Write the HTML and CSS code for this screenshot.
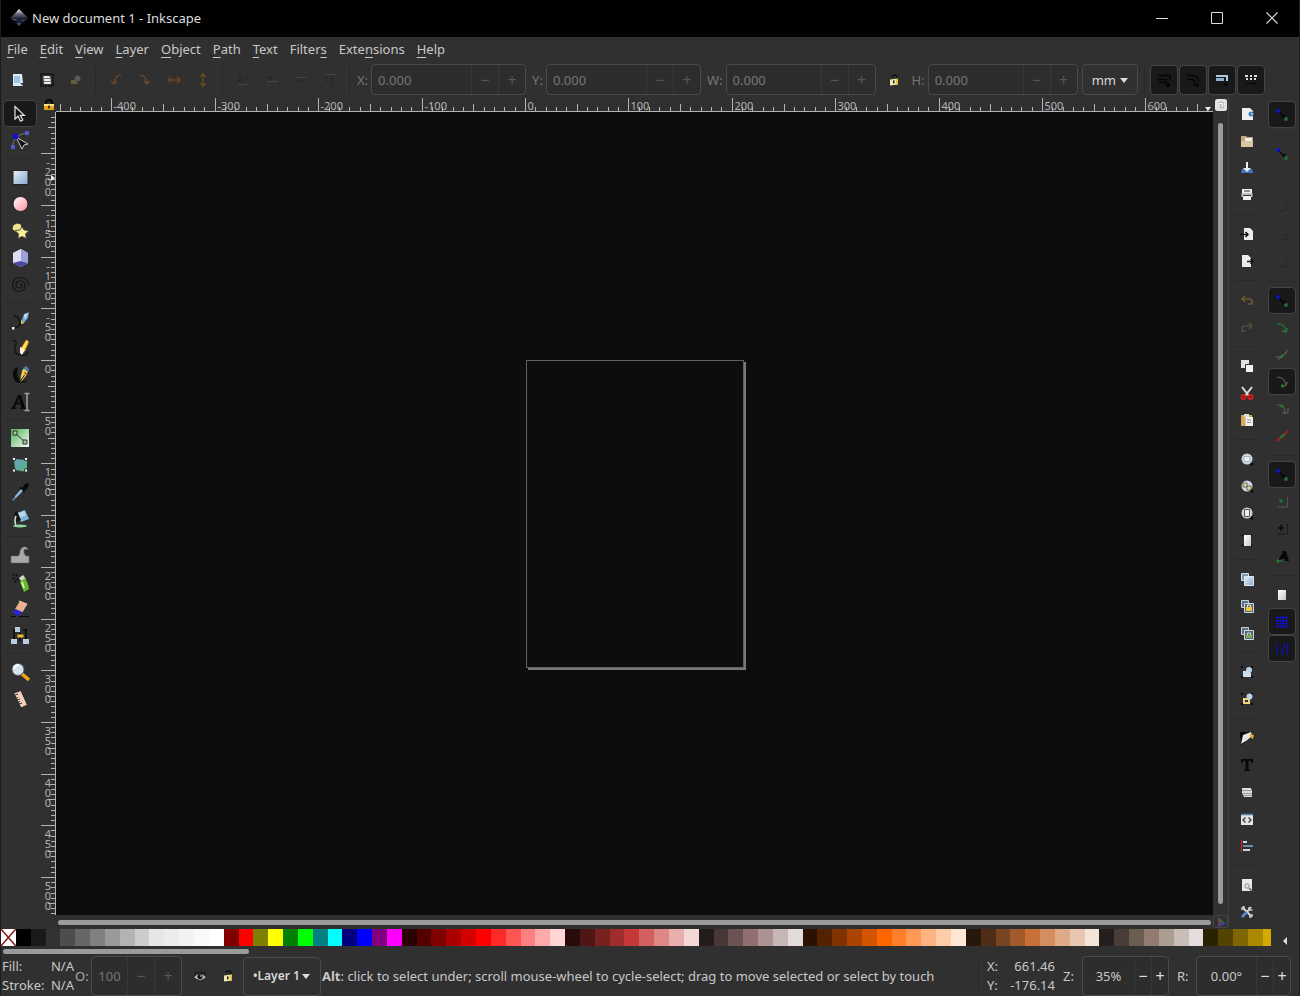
FILE: index.html
```html
<!DOCTYPE html>
<html lang="en">
<head>
<meta charset="utf-8">
<title>New document 1 - Inkscape</title>
<link rel="stylesheet" href="styles.css">
</head>
<body>
<header class="titlebar">
  <svg class="logo" viewBox="0 0 20 20"><defs><linearGradient id="lg" x1="0" y1="0" x2="0" y2="1"><stop offset="0" stop-color="#fff"/><stop offset=".5" stop-color="#667"/><stop offset="1" stop-color="#223"/></linearGradient></defs><path d="M10 1 18 9q1.500 2-1 3l-4 .8 2.500 1.400-3 1.200L10 19l-2-3-2.500-1.500L7 13l-4-1q-2.500-1-1-3z" fill="#1c2030"/><path d="M10 1 19 10l-4-1-1.500 2L11 8.500 9 11 7 9l-2 1.500-3-.5z" fill="url(#lg)"/><path d="M3 11h5l-2 2zM12 12h5l-3 1.500zM8 15h4l-2 3z" fill="#4a5070"/></svg>
  <h1>New document 1 - Inkscape</h1>
  <div class="window-buttons">
    <button aria-label="Minimize"><svg viewBox="0 0 14 14"><path d="M1 7.500h12" stroke="#ddd" fill="none"/></svg></button>
    <button aria-label="Maximize"><svg viewBox="0 0 14 14"><path d="M1.500 1.500h11v11h-11z" stroke="#ddd" fill="none"/></svg></button>
    <button aria-label="Close"><svg viewBox="0 0 14 14"><path d="M1.500 1.500l11 11m0-11-11 11" stroke="#ddd" stroke-width="1.200" fill="none"/></svg></button>
  </div>
</header>
<nav class="menubar">
  <button><u>F</u>ile</button><button><u>E</u>dit</button><button><u>V</u>iew</button><button><u>L</u>ayer</button><button><u>O</u>bject</button><button><u>P</u>ath</button><button><u>T</u>ext</button><button>Filter<u>s</u></button><button>Exte<u>n</u>sions</button><button><u>H</u>elp</button>
</nav>
<div class="toolbar">
  <div class="icon-group" data-icons="selall sellayer desel"></div>
  <i class="vsep"></i>
  <div class="icon-group" data-icons="rotl rotr fliph flipv"></div>
  <i class="vsep"></i>
  <div class="icon-group" data-icons="bottom lower raise top"></div>
  <i class="vsep tight"></i>
  <div class="field"><label for="fx">X:</label><span class="spin wide"><input id="fx" value="0.000" disabled><button disabled>−</button><button disabled>+</button></span></div>
  <div class="field"><label for="fy">Y:</label><span class="spin wide"><input id="fy" value="0.000" disabled><button disabled>−</button><button disabled>+</button></span></div>
  <div class="field"><label for="fw">W:</label><span class="spin"><input id="fw" value="0.000" disabled><button disabled>−</button><button disabled>+</button></span></div>
  <button class="lock" aria-label="Lock ratio"><svg viewBox="0 0 16 16"><use href="#unlock"/></svg></button>
  <div class="field"><label for="fh">H:</label><span class="spin"><input id="fh" value="0.000" disabled><button disabled>−</button><button disabled>+</button></span></div>
  <span class="drop unit"><select aria-label="Unit"><option>mm</option></select></span>
  <i class="vsep short"></i>
  <div class="toggles" data-toggles="scstroke sccorner scgrad scpat"></div>
</div>
<main class="work">
  <div class="toolbox" data-icons="arrow* node | rect circle star cube spiral | bezier pencil calli text | gradient mesh dropper bucket | tweak spray eraser connector | zoom measure"></div>
  <section class="desk">
    <button class="guide-lock" aria-label="Lock guides"><svg viewBox="0 0 12 12"><path d="M3 6V3.500q0-2.500 3-2.500t3 2.500V6" fill="none" stroke="#050505" stroke-width="2"/><path d="M1 5h10v6H1z" fill="#e9a11c"/><path d="M1 5h10v2H1z" fill="#ffe27a"/><path d="M5.200 6.500h1.600v3H5.200z" fill="#222"/></svg></button>
    <div class="ruler-h"><svg id="rh"></svg></div>
    <button class="corner-top" aria-label="Zoom with window"><svg viewBox="0 0 12 12"><rect width="12" height="12" rx="2.500" fill="#e4e4e4"/><rect x="3" y="2.500" width="6" height="7" rx="2" fill="#bbb"/><path d="M4 9V4.500h3.500V7H6" fill="none" stroke="#fff"/></svg></button>
    <div class="ruler-v"><svg id="rv"></svg></div>
    <div class="canvas"><div class="page"></div></div>
    <div class="scroll-v"><i></i></div>
    <div class="scroll-h"><i></i></div>
    <button class="corner-bottom" aria-label="Color managed view"><svg viewBox="0 0 12 12"><path d="M3 1l4 5-4 5z" fill="#743a40"/><path d="M3 1l8 7-5-2z" fill="#2f7a44"/><path d="M3 11l4-5 4 2z" fill="#3d44a0"/></svg></button>
  </section>
  <div class="commands" data-icons="new open save print | import export | undo redo | copy cut paste | zsel zdraw zpage page | dup clone unlink | group ungroup | fill ttext layers xml align | docprop prefs"></div>
  <div class="snaps" data-icons="snap* | snap sn1 sn2 sn3 sn4 | snap* spath sint scusp* ssmooth sline | snap* sobj srot stext | spage sgrid* sguide*"></div>
</main>
<div class="palette"><div class="swatches" id="swatches"></div><button class="palette-menu" aria-label="Palette menu"><svg viewBox="0 0 6 8"><path d="M5 0v8L1 4z" fill="#ddd"/></svg></button></div>
<div class="palette-scroll"><i></i></div>
<footer class="status">
  <div class="style"><span>Fill:</span><b>N/A</b><span>Stroke:</span><b>N/A</b></div>
  <div class="field opacity"><label for="fo">O:</label><span class="spin"><input id="fo" value="100" disabled><button disabled>−</button><button disabled>+</button></span></div>
  <button class="mini" aria-label="Layer visibility"><svg viewBox="0 0 16 16"><path d="M2 9q6-7 12 0-6 6-12 0z" fill="#bbb"/><circle cx="8" cy="8.500" r="2.600" fill="#111"/><circle cx="9" cy="8" r=".8" fill="#fff"/><path d="M2 8.500q6-7 12 0M4 6 3 4m3.500 1L6 3m3.500 2 .5-2m2 3 1-2" stroke="#111" fill="none"/></svg></button>
  <button class="mini" aria-label="Layer lock"><svg viewBox="0 0 16 16"><use href="#unlock"/></svg></button>
  <span class="drop layer"><select aria-label="Layer"><option>•Layer 1</option></select></span>
  <p><strong>Alt</strong>: click to select under; scroll mouse-wheel to cycle-select; drag to move selected or select by touch</p>
  <i class="vsep"></i>
  <div class="coords"><span>X:</span><b>661.46</b><span>Y:</span><b>-176.14</b></div>
  <div class="field view"><label for="fz">Z:</label><span class="spin"><input id="fz" value="35%"><button>−</button><button>+</button></span></div>
  <div class="field view rot"><label for="fr">R:</label><span class="spin"><input id="fr" value="0.00°"><button>−</button><button>+</button></span></div>
</footer>
<svg class="defs" aria-hidden="true">
  <defs>
    <linearGradient id="blue" x1="0" y1="0" x2="1" y2="1"><stop offset="0" stop-color="#e8f0f8"/><stop offset="1" stop-color="#86a8cc"/></linearGradient>
    <linearGradient id="pink" x1="0" y1="0" x2="1" y2="1"><stop offset="0" stop-color="#fff"/><stop offset="1" stop-color="#ff8f9c"/></linearGradient>
    <linearGradient id="green" x1="0" y1="0" x2="1" y2="1"><stop offset="0" stop-color="#4fae58"/><stop offset="1" stop-color="#f4fff4"/></linearGradient>
    <linearGradient id="teal" x1="0" y1="0" x2="1" y2="1"><stop offset="0" stop-color="#6fa3c4"/><stop offset="1" stop-color="#4fb277"/></linearGradient>
    <linearGradient id="grey" x1="0" y1="0" x2="1" y2="1"><stop offset="0" stop-color="#fff"/><stop offset="1" stop-color="#c8c8c4"/></linearGradient>
  </defs>
  <symbol id="unlock" viewBox="0 0 16 16"><path d="M6 5q0-2 2.500-2T11 5v3" fill="none" stroke="#111" stroke-width="1.600"/><path d="M4 7.500l8-1v6l-8 1z" fill="#eee9b0"/><path d="M10 7l2-.5v6l-2 .3z" fill="#e5c33b"/><path d="M7 8.500l1.500-.2v3L7 11.500z" fill="#222"/></symbol>

  <symbol id="arrow" viewBox="0 0 20 20"><path d="M5 2.500v12.500l3-2.800 2.500 5 2.300-1.200-2.500-4.700h4z" fill="#111" stroke="#e6e6e6" stroke-width="1.200"/></symbol>
  <symbol id="node" viewBox="0 0 20 20"><path d="M2 16Q4 3 17 2" fill="none" stroke="#777"/><path d="M6 6l12 7-4 1-2 4z" fill="#111" stroke="#ccc"/><path d="M3 3h5v5H3z" fill="#1010d0"/><path d="M1 14h4v4H1zM15 0h4v4h-4z" fill="#5656c8"/></symbol>
  <symbol id="rect" viewBox="0 0 20 20"><path d="M3 3.500h15v14H3z" fill="url(#blue)" stroke="#222"/></symbol>
  <symbol id="circle" viewBox="0 0 20 20"><circle cx="10.500" cy="10" r="7.500" fill="url(#pink)" stroke="#222"/></symbol>
  <symbol id="star" viewBox="0 0 20 20"><path d="M7 2l4 1 1 4-2 4H5L2 8l1-4z" fill="#efe28e" stroke="#222" stroke-width=".8"/><path d="M12 5.500l2 3.500 5 .5-3.500 3.500 1 4.500-4.500-2-4 2 .5-4.500L5 9.500 10 9z" fill="#f8ee9c" stroke="#333" stroke-width=".8"/></symbol>
  <symbol id="cube" viewBox="0 0 20 20"><path d="M3 5l8-4 7 4v10l-7 4-8-4z" fill="#b9b9e4"/><path d="M3 5l8-4v12l-8 2z" fill="#dcdcf2"/><path d="M3 15l8-2 7 2-7 4z" fill="#4a4aa0"/><path d="M11 1l7 4v10l-7-2z" fill="#a0a0dc"/></symbol>
  <symbol id="spiral" viewBox="0 0 20 20"><path d="M10 10q1-1 2 0 1 3-2 3-4 0-4-3.500T10.500 6Q15 6 15 11t-5.500 5.500Q3 16 2.500 10 3 3 10 2.500q8 0 9 8" fill="none" stroke="#151515" stroke-width="1.200"/></symbol>
  <symbol id="bezier" viewBox="0 0 20 20"><path d="M2 17q8 0 8-5T4 4" fill="none" stroke="#151515" stroke-width="1.500"/><path d="M2 16h2.500v2.500H2z" fill="#eee"/><path d="M11 11l3-8 5-2-1 6-5 6z" fill="#6aa6c8"/><path d="M14 4l4-2-3 7z" fill="#d0e6f2"/><path d="M11 9l3 3-3 1z" fill="#f0c040"/></symbol>
  <symbol id="pencil" viewBox="0 0 20 20"><path d="M2 3q5-2 4 3-4 10 4 11t8-4" fill="none" stroke="#161616" stroke-width="1.500"/><path d="M11 10l5-8 3 2-4 9-4 2z" fill="#f5a81c"/><path d="M12 10l5-8 1 1-4 9z" fill="#ffe07a"/><path d="M10 9l5 3-3 5-2-2z" fill="#fff1d8"/></symbol>
  <symbol id="calli" viewBox="0 0 20 20"><path d="M8 2Q2 4 3 11t7 7q6 0 8-3-6 3-9-1T8 2z" fill="#0b0b0b"/><path d="M12 5l4-4 3 3-2 6-5 6-2 1 .5-6z" fill="#e9cf5e" stroke="#222" stroke-width=".6"/><path d="M13 3l3-2 3 3-1 3z" fill="#4a7ba8"/><path d="M15 7l2 2-1 1-2-2z" fill="#c22"/><path d="M10.500 16l4-6" stroke="#222"/></symbol>
  <symbol id="text" viewBox="0 0 20 20"><path d="M1 17v-1.500h1.500L8 3h3l4 12.500h1V17h-6v-1.500h1.500L10.500 12.500H6L5 15.500h1.500V17zM7 10.500h3L9 6.500z" fill="#0a0a0a"/><path d="M14.500 1.500h5m-5 17h5M17 1.500v17" stroke="#a0a0a0" stroke-width="1.500"/></symbol>
  <symbol id="gradient" viewBox="0 0 20 20"><path d="M1 1h18v18H1z" fill="url(#green)"/><path d="M5 5l10 9" stroke="#333"/><path d="M3 3h4v4H3zM13 12h4v4h-4z" fill="#9fcaa0" stroke="#333"/></symbol>
  <symbol id="mesh" viewBox="0 0 20 20"><path d="M4 4l13 1 0 12L5 15z" fill="url(#teal)"/><path d="M2.500 2.500h3v3h-3zM14.500 2.500h3v3h-3zM2.500 14h3v3h-3zM14.500 14h3v3h-3z" fill="#eee" stroke="#222" stroke-width=".8"/></symbol>
  <symbol id="dropper" viewBox="0 0 20 20"><path d="M12 6l3-4 3-1 1 2-2 4-3 2 1 1-1 1-5-5 1-1z" fill="#0a0a0a"/><path d="M11 7l2 2-7 7-2 1 1-3z" fill="#8fb4d4"/><circle cx="3.500" cy="17.500" r="1.300" fill="#4d7cab"/></symbol>
  <symbol id="bucket" viewBox="0 0 20 20"><path d="M7 4l8-3 4 9-8 3z" fill="#7eb6da"/><path d="M8 4l6-2 2 4-6 3z" fill="#b8d8ec"/><path d="M5 8q-2-5 2-6l4 9-6 2q3-3 2-6L5 16H4z" fill="#151515"/><path d="M6 7q-2 4 0 10" stroke="#c4f0d0" stroke-width="1.500" fill="none"/><ellipse cx="10" cy="17" rx="7" ry="1.500" fill="#8ed69c"/></symbol>
  <symbol id="tweak" viewBox="0 0 20 20"><path d="M1 11h7q2-1 2-5 2-5 6-4 2 1 2 3-2-2-4 0-1 3 2 6h3v7H1z" fill="#a8a8a8" stroke="#666" stroke-width=".5"/></symbol>
  <symbol id="spray" viewBox="0 0 20 20"><path d="M3 2h1v1H3zM6 3h1v1H6zM3 6h1v1H3zM7 7h1v1H7zM5 9h1v1H5z" stroke="#080808" fill="none"/><path d="M9 6l4-3 3 4-4 3z" fill="#d8d8c8"/><path d="M10 10l5-4 3 6 1 5-5 3z" fill="#65b82c"/><path d="M12 10l2 6" stroke="#d2f3a2" stroke-width="2"/></symbol>
  <symbol id="eraser" viewBox="0 0 20 20"><path d="M1 17.500h5m3 0h10" stroke="#0a0a0a"/><path d="M10 2l7 3-5 8-7-3z" fill="#edae90"/><path d="M5 10l7 3-3 4-6-3z" fill="#2626d8"/><path d="M9 2l8 3-5 8" fill="none" stroke="#e9c7b0"/></symbol>
  <symbol id="connector" viewBox="0 0 20 20"><path d="M8 4H4v10m9-10h3v10M10 7v8" stroke="#080808" fill="none" stroke-width="1.500"/><path d="M5 1h5v5H5zM1 13h6v5H1zM13 13h6v5h-6z" fill="#b7cde5"/><path d="M7.500 8.500h6v3h-6z" fill="#f2b535"/></symbol>
  <symbol id="zoom" viewBox="0 0 20 20"><path d="M12 12l7 6" stroke="#f0a616" stroke-width="3.500"/><circle cx="8" cy="7.500" r="6" fill="#d3e2ef" stroke="#555"/><path d="M4 7q0-4 5-4" stroke="#fff" stroke-width="2" fill="none"/></symbol>
  <symbol id="measure" viewBox="0 0 20 20"><path d="M3.500 4L11 1.500 17.500 16 11 19z" fill="#efcdb9" stroke="#222"/><path d="M5 6l3-1M6 9l2-.5M7 11l3-1M8 13l2-.5M9 15l3-1" stroke="#333"/></symbol>

  <symbol id="selall" viewBox="0 0 16 16"><path d="M3 2h9l1 9v3H3z" fill="#dcebf7"/><path d="M4 4h6v7H4z" fill="#9ec3e2"/><path d="M10 11h3v3z" fill="#346"/></symbol>
  <symbol id="sellayer" viewBox="0 0 16 16"><path d="M2 2h12v12H2z" fill="none" stroke="#060606" stroke-width="1.500" stroke-dasharray="1.500 1"/><path d="M4.500 4h6l1 2 .5 6H5z" fill="#e8e8e8"/><path d="M5 6.500h6m-6 3h7" stroke="#777"/></symbol>
  <symbol id="desel" viewBox="0 0 16 16"><path d="M2 2h12v12H2z" fill="none" stroke="#3d2524" stroke-dasharray="1 1"/><circle cx="9.500" cy="6.500" r="3" fill="#59595a"/><path d="M3 8h4l3 4H3z" fill="#655c3c"/></symbol>
  <symbol id="rotl" viewBox="0 0 16 16"><path d="M13 3Q7 3 6 12M3 9l3 3 3-3" fill="none" stroke="#67452a" stroke-width="1.600"/></symbol>
  <symbol id="rotr" viewBox="0 0 16 16"><path d="M3 3q6 0 7 9M7 9l3 3 3-3" fill="none" stroke="#67452a" stroke-width="1.600"/></symbol>
  <symbol id="fliph" viewBox="0 0 16 16"><path d="M2 8h12M5 5L2 8l3 3m6-6 3 3-3 3" fill="none" stroke="#67452a" stroke-width="1.600"/></symbol>
  <symbol id="flipv" viewBox="0 0 16 16"><path d="M8 2v12M5 5l3-3 3 3m-6 6 3 3 3-3" fill="none" stroke="#67452a" stroke-width="1.600"/></symbol>
  <symbol id="bottom" viewBox="0 0 16 16"><path d="M5 2v8M3 8l2 2 2-2m3-4h4m-4 3h4" stroke="#242424" fill="none"/><path d="M2 12.500h12" stroke="#4b4635"/></symbol>
  <symbol id="lower" viewBox="0 0 16 16"><path d="M2 6h5m0-2v5" stroke="#242424"/><path d="M3 9.500h11" stroke="#504832"/></symbol>
  <symbol id="raise" viewBox="0 0 16 16"><path d="M2 5.500h11" stroke="#454545"/><path d="M3 9h6m2-2v5" stroke="#242424"/></symbol>
  <symbol id="top" viewBox="0 0 16 16"><path d="M2 2.500h12" stroke="#454545"/><path d="M10 14V5M8 7l2-2 2 2M3 6h4M3 9h4" stroke="#242424" fill="none"/></symbol>
  <symbol id="scstroke" viewBox="0 0 16 16"><path d="M2 3.500h12v5M2 7.500h8v3H3m9 0v4m-2-2 2 2 2-2" fill="none" stroke="#050505" stroke-width="1.500"/></symbol>
  <symbol id="sccorner" viewBox="0 0 16 16"><path d="M2 3.500h6q5 0 6 6M2 7.500h5q3 0 3 4M8 13h6m-2-2v4" fill="none" stroke="#050505" stroke-width="1.300"/></symbol>
  <symbol id="scgrad" viewBox="0 0 16 16"><path d="M2 3h12v6h-2V5H2z" fill="#b2cbe4"/><path d="M2 6h8v3H2z" fill="#8fb0d2"/><path d="M9 12.500h5m-2-2v4" stroke="#000"/></symbol>
  <symbol id="scpat" viewBox="0 0 16 16"><path d="M2 3h3v2H2zM7 3h2v2H7zM11 3h3v2h-3zM3 6h2v2H3zM7 6h2v2H7zM11 6h2v2h-2z" fill="#ddd"/><path d="M3 11.500h10m-2-2 2 2-2 2" stroke="#050505" fill="none"/></symbol>

  <symbol id="new" viewBox="0 0 16 16"><path d="M3 2h8l3 3v9H3z" fill="#f0f0ee"/><circle cx="12" cy="8" r="2.500" fill="#3d7cc0"/><path d="M12 8h2" stroke="#fff"/></symbol>
  <symbol id="open" viewBox="0 0 16 16"><path d="M2 3h5l1 1h6v10H2z" fill="#c3a67e"/><path d="M6 5h7v4H6z" fill="#eee"/><path d="M2 8h12v6H2z" fill="#dcc6a2"/></symbol>
  <symbol id="save" viewBox="0 0 16 16"><path d="M3 9h10l1 4H2z" fill="#3e78c4"/><path d="M7 2h2v6h3l-4 4-4-4h3z" fill="#eee"/></symbol>
  <symbol id="print" viewBox="0 0 16 16"><path d="M3 2h10v4H3z" fill="#eee"/><path d="M5 4h6" stroke="#333"/><path d="M2.500 6h11v4h-11z" fill="#bcc0bc"/><path d="M4 9h8v4H4z" fill="#eef5e8"/><path d="M4 8.500h8" stroke="#333"/></symbol>
  <symbol id="import" viewBox="0 0 16 16"><path d="M5 2h6l3 3v9H5z" fill="#ecece8"/><path d="M1 8.500h8M6.500 6 9 8.500 6.500 11" fill="none" stroke="#111" stroke-width="1.500"/></symbol>
  <symbol id="export" viewBox="0 0 16 16"><path d="M3 2h6l3 3v9H3z" fill="#ecece8"/><path d="M8 8.500h6M11.500 6 14 8.500 11.500 11" fill="none" stroke="#111" stroke-width="1.500"/></symbol>
  <symbol id="undo" viewBox="0 0 16 16"><path d="M6 4L3 7l3 3M3 7h8q3 1 2 5l-4 0" fill="none" stroke="#655a30" stroke-width="1.600"/></symbol>
  <symbol id="redo" viewBox="0 0 16 16"><path d="M10 4l3 3-3 3m3-3H5q-3 1-2 5h4" fill="none" stroke="#42543a" stroke-width="1.600"/></symbol>
  <symbol id="copy" viewBox="0 0 16 16"><path d="M2 2h8v8H2z" fill="#e2e2e0"/><path d="M6.500 6.500h8v8h-8z" fill="#f2f2ee" stroke="#333"/></symbol>
  <symbol id="cut" viewBox="0 0 16 16"><path d="M3 2l7 9m3-9-7 9" stroke="#ddd" stroke-width="2"/><circle cx="4.500" cy="12" r="2" fill="none" stroke="#d91c1c" stroke-width="2"/><circle cx="11.500" cy="12" r="2" fill="none" stroke="#d91c1c" stroke-width="2"/></symbol>
  <symbol id="paste" viewBox="0 0 16 16"><path d="M2 3h11v11H2z" fill="#d5a65c"/><path d="M5 2h5v3H5z" fill="#ddd"/><path d="M6.500 5h7.500v9H6.500z" fill="#f0f0ec"/><path d="M8 8h4m-4 2.500h4" stroke="#999"/></symbol>
  <symbol id="lens" viewBox="0 0 16 16"><path d="M10 11l4 3" stroke="#080808" stroke-width="2.500"/><circle cx="8" cy="8" r="5.500" fill="#c9d8e3"/></symbol>
  <symbol id="zsel" viewBox="0 0 16 16"><use href="#lens"/><path d="M5 5.500h6v5H5z" fill="#eee" stroke="#a8b2ba"/></symbol>
  <symbol id="zdraw" viewBox="0 0 16 16"><use href="#lens"/><path d="M4 5h4v4H4zM8 8h4v4H8z" fill="#e6d79c" stroke="#444" stroke-width=".7"/></symbol>
  <symbol id="zpage" viewBox="0 0 16 16"><use href="#lens"/><path d="M5.500 4.500h5v7h-5z" fill="#eee" stroke="#555"/></symbol>
  <symbol id="page" viewBox="0 0 16 16"><path d="M3 3h1v1H3zM12 3h1v1h-1zM3 13h1v1H3zM12 13h1v1h-1z" stroke="#080808"/><path d="M5 3h7v11H5z" fill="url(#grey)"/></symbol>
  <symbol id="dup" viewBox="0 0 16 16"><path d="M2.500 2.500h7v7h-7z" fill="#8099b0" stroke="#d2dfea"/><path d="M5.500 5.500h9v9h-9z" fill="url(#blue)" stroke="#dce8f2"/></symbol>
  <symbol id="pair" viewBox="0 0 16 16"><path d="M2.500 2.500h7v7h-7z" fill="#5d7182" stroke="#c2d2e0"/><path d="M5.500 5.500h9v9h-9z" fill="#596771" stroke="#c8d8e6"/></symbol>
  <symbol id="clone" viewBox="0 0 16 16"><use href="#pair"/><path d="M7 9h6v4H7z" fill="#f0c638"/><path d="M8.500 9V7h3v2" fill="none" stroke="#eee"/></symbol>
  <symbol id="unlink" viewBox="0 0 16 16"><use href="#pair"/><path d="M7 10h6v3H7z" fill="#83ad52"/><path d="M8.500 10V8h3v2" fill="none" stroke="#ddd"/></symbol>
  <symbol id="handles" viewBox="0 0 16 16"><path d="M2 2h2v2H2zM12 2h2v2h-2zM2 12h2v2H2zM12 12h2v2h-2z" fill="#080808"/></symbol>
  <symbol id="group" viewBox="0 0 16 16"><use href="#handles"/><circle cx="10" cy="6" r="3" fill="#bdd2e6"/><path d="M4 7h4l4 2v4H4z" fill="#d0dfed"/></symbol>
  <symbol id="ungroup" viewBox="0 0 16 16"><use href="#handles"/><path d="M4 7h7v6H4z" fill="#eed477"/><path d="M6 9h3v2H6z" fill="#333"/><circle cx="10.500" cy="5.500" r="3" fill="#bdd2e6"/></symbol>
  <symbol id="fill" viewBox="0 0 16 16"><path d="M1 2h10l-4 10-5 3z" fill="#080808"/><path d="M2 14l2-9 8-3 1 4-6 5z" fill="#e6e6e2"/><path d="M11 4l4 1-1 4-3-2z" fill="#eaac30"/></symbol>
  <symbol id="ttext" viewBox="0 0 16 16"><path d="M2 2h12v4h-1.500L12 4H9.500v8.500H11V14H5v-1.500h1.500V4H4L3.500 6H2z" fill="#080808"/></symbol>
  <symbol id="layers" viewBox="0 0 16 16"><path d="M3 4h9l1 3v6H5L3 9z" fill="#ddd"/><path d="M3 6.500h9.500m-9 3H13m-9 2h9" stroke="#777" stroke-width=".7"/></symbol>
  <symbol id="xml" viewBox="0 0 16 16"><path d="M2 3h12v11H2z" fill="#e4e4e0"/><path d="M2 3.500h12" stroke="#5c81a8" stroke-width="1.500"/><path d="M6.500 6.500L4 9l2.500 2.500m3-5L12 9l-2.500 2.500" fill="none" stroke="#333" stroke-width="1.200"/></symbol>
  <symbol id="align" viewBox="0 0 16 16"><path d="M2.500 2v12" stroke="#c02424" stroke-width="1.300"/><path d="M4 3h4v2H4zM4 11h7v2H4z" fill="#c6d9ea"/><path d="M4 7h10v2H4z" fill="#6f8ca8"/></symbol>
  <symbol id="docprop" viewBox="0 0 16 16"><path d="M3 2h10v12H3z" fill="#e8e8e4"/><circle cx="8" cy="9" r="2.200" fill="none" stroke="#888"/><path d="M10 11l3 3" stroke="#666" stroke-width="1.500"/></symbol>
  <symbol id="prefs" viewBox="0 0 16 16"><path d="M3 3l10 10" stroke="#d8d8d8" stroke-width="2"/><path d="M12 3L8 8" stroke="#ddd" stroke-width="2"/><path d="M8 8l-5 5" stroke="#558fd0" stroke-width="2.500"/><path d="M10 3v3h3.500M2 5h3V2M11 14v-3h3" fill="none" stroke="#c8c8c8" stroke-width="1.500"/></symbol>

  <symbol id="snap" viewBox="0 0 16 16"><path d="M4 4l8 8M9 11l1-2 2-1" stroke="#050505" stroke-width="1.300" fill="none"/><circle cx="4" cy="4" r="2" fill="#1414c4"/><circle cx="12" cy="12" r="2" fill="#1f6a37"/></symbol>
  <symbol id="sn1" viewBox="0 0 16 16"><path d="M4 3h9v8" fill="none" stroke="#2a392d"/></symbol>
  <symbol id="sn2" viewBox="0 0 16 16"><path d="M13 3v8H4" fill="none" stroke="#292929"/><path d="M11 11h3v2h-3z" fill="#25402c"/></symbol>
  <symbol id="sn3" viewBox="0 0 16 16"><path d="M13 5v8H3" fill="none" stroke="#292929"/><path d="M11 4h3v2h-3z" fill="#25402c"/></symbol>
  <symbol id="sn4" viewBox="0 0 16 16"><path d="M13 3v10H3" fill="none" stroke="#292929"/><path d="M4 4h3v2H4z" fill="#25402c"/></symbol>
  <symbol id="spath" viewBox="0 0 16 16"><path d="M3 4q8-1 9 8M8 11l4 1 2-4" fill="none" stroke="#237a34" stroke-width="1.300"/></symbol>
  <symbol id="sint" viewBox="0 0 16 16"><path d="M2 10h6l6-7M4 13l9-8" fill="none" stroke="#666"/><circle cx="8" cy="9" r="1.500" fill="#237a34"/></symbol>
  <symbol id="scusp" viewBox="0 0 16 16"><path d="M3 3q8 0 9 9M8 12h3l3-4" fill="none" stroke="#5e5e5e" stroke-width="1.200"/><circle cx="8.500" cy="12" r="1.700" fill="#237a34"/></symbol>
  <symbol id="ssmooth" viewBox="0 0 16 16"><path d="M3 4q8-1 8 8h3V7M8 11l3 2" fill="none" stroke="#606060"/><circle cx="8" cy="5" r="1.700" fill="#237a34"/></symbol>
  <symbol id="sline" viewBox="0 0 16 16"><path d="M3 13L14 3" stroke="#a52020" stroke-width="1.800"/><path d="M6.500 10l4-4" stroke="#237a34" stroke-width="2"/></symbol>
  <symbol id="sobj" viewBox="0 0 16 16"><path d="M13.500 3v10H3" fill="none" stroke="#555"/><circle cx="7" cy="7" r="2" fill="#1f6a37"/></symbol>
  <symbol id="srot" viewBox="0 0 16 16"><path d="M13.500 3v10H3" fill="none" stroke="#111" stroke-dasharray="2 1"/><path d="M4 7h6M7 4v6" stroke="#080808" stroke-width="1.500"/></symbol>
  <symbol id="stext" viewBox="0 0 16 16"><path d="M4 13L9 3h3l3 10h-4v-2H7l-1 2z" fill="#080808"/><path d="M3 13h6" stroke="#237a34"/><circle cx="4" cy="13" r="1.700" fill="#237a34"/></symbol>
  <symbol id="spage" viewBox="0 0 16 16"><path d="M4 3h8v10H4z" fill="url(#grey)"/></symbol>
  <symbol id="sgrid" viewBox="0 0 16 16"><path d="M2 3.500h12M2 6.500h12M2 9.500h12M2 12.500h12M3.500 2v12M6.500 2v12M9.500 2v12M12.500 2v12" stroke="#1010c8"/></symbol>
  <symbol id="sguide" viewBox="0 0 16 16"><path d="M2.500 2v12M13.500 2v12M7 14L11 2" stroke="#1010c8" stroke-width="1.200"/></symbol>
</svg>
<script src="app.js"></script>
</body>
</html>
```
FILE: styles.css
```css
* { box-sizing: border-box; }
body {
  margin: 0; height: 100vh; display: flex; flex-direction: column; overflow: hidden;
  background: #303030; color: #c8c8c8; font: 13px/20px "Noto Sans", "Open Sans", sans-serif;
  border: 1px solid #1c1c1c; border-width: 0 1px;
}
button, input, select { font: inherit; color: inherit; background: none; border: 0; padding: 0; margin: 0; }
svg { display: block; }
u { text-underline-offset: 3px; }
.defs { position: absolute; width: 0; height: 0; }

.titlebar { height: 37px; flex: none; background: #000; display: flex; align-items: center; padding: 0 0 1px 8px; }
.titlebar h1 { font-size: 13px; font-weight: 400; margin: 0 auto 0 3px; color: #ddd; }
.logo { width: 20px; height: 20px; }
.window-buttons { display: flex; }
.window-buttons button { width: 55px; height: 34px; display: grid; place-items: center; }
.window-buttons svg { width: 14px; height: 14px; }

.menubar { height: 25px; flex: none; display: flex; align-items: center; gap: 12px; padding: 0 0 1px 6px; }

.toolbar { height: 35px; flex: none; display: flex; align-items: center; padding-left: 2px; color: #757575; }
.icon-group { display: flex; }
.icon-group button { width: 29px; height: 29px; display: grid; place-items: center; }
.icon-group svg, .lock svg, .toggles svg, .mini svg { width: 16px; height: 16px; }
.vsep { width: 1px; height: 30px; background: #292929; margin: 0 5px; flex: none; }
.tight { margin-right: 1px; }
.short { margin: 0 5px 0 6px; }
.field { display: flex; align-items: center; }
.toolbar .field { margin-left: 6px; }
.toolbar .field label { margin-right: 3px; }
.spin { display: flex; width: 150px; height: 31px; border: 1px solid #4a4a4a; border-radius: 4px; background: #2d2d2d; }
.spin.wide { width: 155px; }
.spin input { flex: 1; min-width: 0; padding-left: 6px; }
.spin button { width: 27px; border-left: 1px solid #383838; font-size: 16px; color: #555; }
.lock { width: 24px; display: grid; place-items: center; margin-left: 6px; }
.drop { position: relative; display: flex; border: 1px solid #4a4a4a; border-radius: 4px; color: #d8d8d8; }
.drop select { appearance: none; width: 100%; padding-left: 9px; }
.drop::after { content: ""; position: absolute; right: 9px; top: 50%; margin-top: -2px; border: 4px solid transparent; border-top: 5px solid #ddd; border-bottom: 0; pointer-events: none; }
.unit { width: 56px; height: 31px; margin-left: 4px; }
.toggles { display: flex; gap: 1px; }
.toggles button, button.on { background: #191919; border: 1px solid #454545; border-radius: 4px; }
.toggles button { width: 28px; height: 30px; display: grid; place-items: center; }

.work { flex: 1; min-height: 0; display: flex; }
.toolbox, .commands, .snaps { flex: none; display: flex; flex-direction: column; align-items: center; padding-top: 3px; }
.toolbox { width: 38px; margin-right: 2px; }
.toolbox button, .commands button, .snaps button { display: grid; place-items: center; height: 27px; width: 34px; flex: none; }
.toolbox svg { width: 20px; height: 20px; }
.commands { width: 36px; }
.snaps { width: 34px; padding: 4px 1px 0 0; }
.snaps button { width: 28px; }
.commands svg, .snaps svg { width: 16px; height: 16px; }
.hsep { flex: none; width: 34px; height: 9px; display: grid; align-items: center; }
.hsep::after { content: ""; height: 1px; background: #2a2a2a; }
.commands .hsep, .snaps .hsep { height: 12px; width: 28px; }

.desk { flex: 1; min-width: 0; display: grid; grid-template: 15px 1fr 13px / 15px 1fr 15px; border-right: 1px solid #414141; }
.ruler-h, .ruler-v { min-width: 0; min-height: 0; overflow: hidden; }
.ruler-h { border-bottom: 1px solid #b4b4b4; }
.ruler-v { border-right: 1px solid #b4b4b4; }
.ruler-h svg, .ruler-v svg { width: 100%; height: 100%; }
.ruler-h text, .ruler-v text { font-size: 11px; fill: #b4b4b4; }
.ruler-v text { text-anchor: middle; }
.guide-lock, .corner-top, .corner-bottom { display: grid; place-items: center; }
.guide-lock svg, .corner-top svg, .corner-bottom svg { width: 12px; height: 12px; }
.corner-bottom { border: 1px solid #444; border-radius: 3px; }
.canvas { background: #0d0d0d; display: grid; place-items: center; }
.page { width: 218px; height: 308px; border: 1px solid #606060; box-shadow: 2px 2px 0 #777; }
.scroll-v { display: flex; justify-content: center; padding: 11px 0; }
.scroll-v i { width: 5px; border-radius: 3px; background: #9b9b9b; }
.scroll-h { grid-column: 1 / 3; display: flex; align-items: center; padding: 2px 2px 0 17px; }
.scroll-h i { flex: 1; height: 5px; border-radius: 3px; background: #9b9b9b; }

.palette { flex: none; height: 18px; display: flex; padding-top: 1px; }
.swatches { flex: 1; display: flex; }
.swatches button { flex: 1 1 0; }
.swatches button:last-child { flex-grow: .55; }
.swatches .none { background: #fff; }
.swatches .none svg { width: 100%; height: 100%; }
.palette-menu { width: 28px; display: grid; place-items: center; padding-top: 7px; }
.palette-menu svg { width: 6px; height: 8px; }
.palette-scroll { flex: none; height: 10px; padding: 3px 2px 2px; display: flex; }
.palette-scroll i { width: 19%; height: 5px; border-radius: 3px; background: #9b9b9b; }

.status { flex: none; height: 40px; display: flex; align-items: center; padding: 0 8px 0 1px; }
.status b { font-weight: 400; text-align: right; }
.style { display: grid; grid-template-columns: 46px 26px; flex: none; }
.style, .coords { line-height: 19px; white-space: nowrap; }
.status .spin { height: 40px; width: 91px; }
.status .spin input { padding: 0; text-align: center; }
.opacity { color: #757575; }
.opacity label { width: 17px; padding-left: 1px; color: #aaa; }
.mini { width: 28px; display: grid; place-items: center; flex: none; }
.opacity + .mini { margin-left: 4px; }
.layer { width: 78px; height: 39px; flex: none; font-size: 12px; font-weight: 600; margin-left: 1px; }
.layer::after { right: 10px; }
.status p { margin: 0 auto 0 1px; white-space: nowrap; }
.coords { display: grid; grid-template-columns: 14px 54px; margin-left: 3px; }
.view { margin-left: 8px; }
.view label { width: 19px; }
.view .spin { width: 87px; }
.view .spin button { width: 17px; color: #ddd; }
.rot .spin { width: 95px; }
```
FILE: app.js
```js
const icon = (id) => `<svg viewBox="0 0 16 16"><use href="#${id}"/></svg>`;

document.querySelectorAll('[data-icons]').forEach((box) => {
  box.innerHTML = box.dataset.icons.split(' ').map((name) => {
    if (name === '|') return '<i class="hsep"></i>';
    const id = name.replace('*', '');
    return `<button aria-label="${id}"${name.endsWith('*') ? ' class="on"' : ''}>${icon(id)}</button>`;
  }).join('');
});
document.querySelectorAll('[data-toggles]').forEach((box) => {
  box.innerHTML = box.dataset.toggles.split(' ').map((id) => `<button aria-label="${id}">${icon(id)}</button>`).join('');
});

const colors = ('000000 1a1a1a 333333 4d4d4d 666666 808080 999999 b3b3b3 cccccc e6e6e6 ececec f2f2f2 f9f9f9 ffffff ' +
  '800000 ff0000 808000 ffff00 008000 00ff00 008080 00ffff 000080 0000ff 800080 ff00ff ' +
  '2b0000 550000 800000 aa0000 d40000 ff0000 ff2a2a ff5555 ff8080 ffaaaa ffd5d5 ' +
  '280b0b 501616 782121 a02c2c c83737 d35f5f de8787 e9afaf f4d7d7 241c1c 483737 6c5353 916f6f ac9393 c8b7b7 e3dbdb ' +
  '2b1100 552200 803300 aa4400 d45500 ff6600 ff7f2a ff9955 ffb380 ffccaa ffe6d5 ' +
  '28170b 502d16 784421 a05a2c c87137 d38d5f deaa87 e9c6af f4e3d7 241f1c 483e37 6c5d53 917c6f ac9d93 c8beb7 e3dedb ' +
  '2b2200 554400 806600 aa8800 d4aa00').split(' ');
document.getElementById('swatches').innerHTML =
  '<button class="none" aria-label="None"><svg viewBox="0 0 15 17" preserveAspectRatio="none"><path d="M0 0l15 17M15 0L0 17" stroke="#8a1c1c" stroke-width="1.500"/></svg></button>' +
  colors.map((c) => `<button aria-label="#${c}" style="background:#${c}"></button>`).join('');

const SCALE = 1.034;
function drawRulers() {
  const rh = document.getElementById('rh');
  const rv = document.getElementById('rv');
  const w = rh.clientWidth;
  const h = rv.clientHeight;
  const ox = Math.round(w / 2 - 110);
  const oy = Math.round(h / 2 - 154);
  let path = '';
  let labels = '';
  for (let u = Math.ceil(-ox / SCALE / 10) * 10; ox + u * SCALE < w; u += 10) {
    const x = Math.round(ox + u * SCALE) + 0.5;
    const len = u % 100 === 0 ? 13 : u % 50 === 0 ? 7 : 4;
    path += `M${x} 14v${-len}`;
    if (u % 100 === 0) labels += `<text x="${x + 2}" y="13">${u}</text>`;
  }
  rh.innerHTML = `<path d="${path}" stroke="#b4b4b4"/>${labels}<path d="M${w - 8} 10h6l-3 4z" fill="#eee"/>`;
  path = '';
  labels = '';
  for (let u = Math.ceil(-oy / SCALE / 5) * 5; oy + u * SCALE < h; u += 5) {
    const y = Math.round(oy + u * SCALE) + 0.5;
    const len = u % 50 === 0 ? 14 : u % 25 === 0 ? 7 : 4;
    path += `M14 ${y}h${-len}`;
    if (u % 50 === 0) {
      [...String(u)].forEach((ch, i) => { labels += `<text x="7" y="${y + 12 + i * 10}">${ch}</text>`; });
    }
  }
  rv.innerHTML = `<path d="${path}" stroke="#b4b4b4"/>${labels}<path d="M10 63v6l4-3z" fill="#eee"/>`;
}
drawRulers();
addEventListener('resize', drawRulers);
```
